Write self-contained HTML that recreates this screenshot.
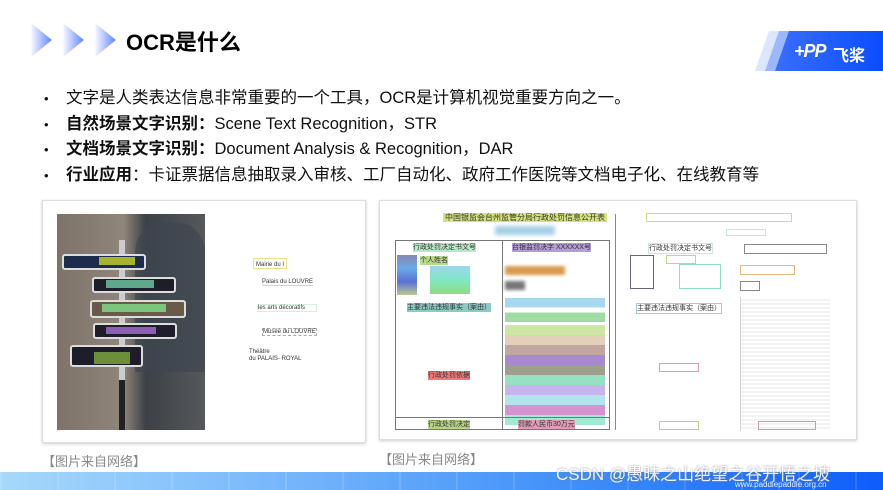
<!DOCTYPE html>
<html><head><meta charset="utf-8"><style>
*{margin:0;padding:0;box-sizing:border-box}
body{width:883px;height:490px;background:#fff;position:relative;overflow:hidden;font-family:"Liberation Sans","Noto Sans CJK SC",sans-serif;color:#111}
.abs{position:absolute}
.chev{position:absolute;top:22px;width:22px;height:36px;background:linear-gradient(90deg,rgba(80,120,255,0) 0%,rgba(80,120,255,.9) 100%);clip-path:polygon(0 0,100% 50%,0 100%)}
.title{left:126px;top:25px;font-size:22px;font-weight:bold;color:#000}
ul{position:absolute;left:44px;top:86px;list-style:none;font-size:16.5px;line-height:25.6px}
ul li:before{content:"•";display:inline-block;width:22px;font-size:13px}
b{font-weight:bold}
.panel{position:absolute;background:#fff;border:1px solid #ddd;box-shadow:0 1px 3px rgba(0,0,0,.2)}
.cap{position:absolute;font-size:13px;color:#888}
.small{font-size:6px;position:absolute;color:#333}
.box{position:absolute;border:1px solid}
.hl{position:absolute;font-size:7px;line-height:9px;color:#333;filter:blur(.3px)}
</style></head><body>
<div class="chev" style="left:30px"></div>
<div class="chev" style="left:62px"></div>
<div class="chev" style="left:94px"></div>
<div class="abs title">OCR是什么</div>
<!-- logo -->
<div class="abs" style="left:755px;top:31px;width:30px;height:40px;background:#dce6ff;clip-path:polygon(14px 0,100% 0,calc(100% - 14px) 100%,0 100%)"></div>
<div class="abs" style="left:765px;top:31px;width:30px;height:40px;background:#9bb8ff;clip-path:polygon(14px 0,100% 0,calc(100% - 14px) 100%,0 100%)"></div>
<div class="abs" style="left:775px;top:31px;width:108px;height:40px;background:linear-gradient(90deg,#3a6dff,#0a4dff);clip-path:polygon(14px 0,100% 0,100% 100%,0 100%)"></div>
<div class="abs" style="left:794px;top:41px;color:#fff;font-size:18px;font-style:italic;font-weight:bold;letter-spacing:-1px">+PP</div>
<div class="abs" style="left:833px;top:42px;color:#fff;font-size:16px;font-weight:bold">飞桨</div>
<ul>
<li>文字是人类表达信息非常重要的一个工具，OCR是计算机视觉重要方向之一。</li>
<li><b>自然场景文字识别：</b>Scene Text Recognition，STR</li>
<li><b>文档场景文字识别：</b>Document Analysis &amp; Recognition，DAR</li>
<li><b>行业应用</b>：卡证票据信息抽取录入审核、工厂自动化、政府工作医院等文档电子化、在线教育等</li>
</ul>
<!-- left panel -->
<div class="panel" style="left:42px;top:200px;width:324px;height:243px"></div>
<div class="abs" style="left:57px;top:214px;width:148px;height:216px;background:linear-gradient(90deg,#7d7369 0%,#8f857a 45%,#3c4147 60%,#55595c 100%)"></div>
<div class="abs" style="left:135px;top:222px;width:70px;height:150px;background:#3e4650;border-radius:30px 30px 0 0;opacity:.7"></div>
<div class="abs" style="left:119px;top:240px;width:6px;height:190px;background:#ccc"></div>
<div class="abs" style="left:119px;top:380px;width:6px;height:50px;background:#222"></div>
<div class="abs" style="left:62px;top:254px;width:84px;height:16px;background:#1d2b4d;border:2px solid #ddd;border-radius:3px"></div>
<div class="abs" style="left:99px;top:257px;width:36px;height:8px;background:#a6b42d"></div>
<div class="abs" style="left:92px;top:277px;width:84px;height:16px;background:#1e1d2a;border:2px solid #ddd;border-radius:3px"></div>
<div class="abs" style="left:106px;top:280px;width:48px;height:8px;background:#5fa88c"></div>
<div class="abs" style="left:90px;top:300px;width:96px;height:18px;background:#6a5a48;border:2px solid #ddd;border-radius:3px"></div>
<div class="abs" style="left:102px;top:304px;width:64px;height:8px;background:#7cc57c"></div>
<div class="abs" style="left:93px;top:323px;width:84px;height:16px;background:#1e1d2a;border:2px solid #ddd;border-radius:3px"></div>
<div class="abs" style="left:106px;top:327px;width:50px;height:7px;background:#8a5fb4"></div>
<div class="abs" style="left:70px;top:345px;width:73px;height:22px;background:#1e1d2a;border:2px solid #ddd;border-radius:3px"></div>
<div class="abs" style="left:94px;top:352px;width:36px;height:12px;background:#6d8f3a"></div>
<div class="small" style="left:253px;top:258px;border:1px solid #e7e28a;padding:0 2px">Mairie du I<sup></sup></div>
<div class="small" style="left:262px;top:279px;border-bottom:1px solid #b8e0d8">Palais du LOUVRE</div>
<div class="small" style="left:257px;top:304px;border:1px solid #d5eedd;width:60px">les arts décoratifs</div>
<div class="small" style="left:262px;top:328px;border:1px dashed #aaa">Musée du LOUVRE</div>
<div class="small" style="left:249px;top:349px;line-height:7px">Théâtre<br>du PALAIS- ROYAL</div>
<div class="cap" style="left:42px;top:451px">【图片来自网络】</div>
<!-- right panel -->
<div class="panel" style="left:379px;top:200px;width:478px;height:240px"></div>
<div class="abs" style="left:615px;top:214px;width:1px;height:216px;background:#888"></div>
<div class="hl" style="left:443px;top:213px;font-size:8px;background:#d7e37a;padding:0 2px">中国银监会台州监管分局行政处罚信息公开表</div>
<div class="abs" style="left:495px;top:226px;width:60px;height:9px;background:#a4cfe6;filter:blur(2px)"></div>
<div class="abs" style="left:395px;top:240px;width:215px;height:190px;border:1px solid #777"></div>
<div class="abs" style="left:502px;top:240px;width:1px;height:190px;background:#777"></div>
<div class="hl" style="left:413px;top:243px;background:#b7e8c8">行政处罚决定书文号</div>
<div class="hl" style="left:512px;top:243px;background:#b59bd6">台银监罚决字 XXXXXX号</div>
<div class="abs" style="left:397px;top:255px;width:20px;height:40px;background:linear-gradient(#8989b4,#69a9e4,#5b70d6,#bcc88e)"></div>
<div class="hl" style="left:420px;top:256px;background:#b8d88a">个人姓名</div>
<div class="abs" style="left:430px;top:266px;width:40px;height:28px;background:linear-gradient(#9fd6ec,#7fe7c4,#8fdc80)"></div>
<div class="abs" style="left:505px;top:266px;width:60px;height:9px;background:#d99a4f;filter:blur(1.5px)"></div>
<div class="abs" style="left:505px;top:281px;width:20px;height:9px;background:#777;filter:blur(1.5px)"></div>
<div class="hl" style="left:407px;top:303px;background:#8ccbc4">主要违法违规事实（案由）</div>
<div class="abs" style="left:505px;top:298px;width:100px;height:24px;background:linear-gradient(#a7d8ef 0 40%,#fff 40% 60%,#9fdca3 60%)"></div>
<div class="abs" style="left:505px;top:325px;width:100px;height:100px;background:linear-gradient(#cce8a4 0 10%,#e3cfbc 10% 20%,#c1a7a0 20% 30%,#a58ad0 30% 40%,#9da08a 40% 50%,#97e0c4 50% 60%,#c6b4ec 60% 70%,#b2e4ee 70% 80%,#d593cf 80% 90%,#9fe9d5 90%)"></div>
<div class="hl" style="left:428px;top:371px;background:#ee7b7b">行政处罚依据</div>
<div class="abs" style="left:395px;top:417px;width:215px;height:1px;background:#777"></div>
<div class="hl" style="left:428px;top:420px;background:#b6d283">行政处罚决定</div>
<div class="hl" style="left:518px;top:420px;background:#e09ab4">罚款人民币30万元</div>
<div class="box" style="left:646px;top:213px;width:146px;height:9px;border-color:#d5dc7a"></div>
<div class="box" style="left:726px;top:229px;width:40px;height:7px;border-color:#bde6ea"></div>
<div class="hl" style="left:648px;top:243px;font-size:7px;border:1px solid #cceadb">行政处罚决定书文号</div>
<div class="box" style="left:744px;top:244px;width:83px;height:10px;border-color:#888"></div>
<div class="box" style="left:630px;top:255px;width:24px;height:34px;border-color:#667"></div>
<div class="box" style="left:666px;top:255px;width:30px;height:9px;border-color:#b8d88a"></div>
<div class="box" style="left:679px;top:264px;width:42px;height:25px;border-color:#8fdcbc"></div>
<div class="box" style="left:740px;top:265px;width:55px;height:10px;border-color:#e0b87a"></div>
<div class="box" style="left:740px;top:281px;width:20px;height:10px;border-color:#888"></div>
<div class="hl" style="left:636px;top:303px;border:1px solid #9cd">主要违法违规事实（案由）</div>
<div class="abs" style="left:740px;top:297px;width:90px;height:134px;background:repeating-linear-gradient(#fff 0 2px,#f0f0f0 2px 4px);border-left:1px solid #ccc;opacity:.8"></div>
<div class="box" style="left:659px;top:363px;width:40px;height:9px;border-color:#e29b9b"></div>
<div class="box" style="left:659px;top:421px;width:40px;height:9px;border-color:#b6d283"></div>
<div class="box" style="left:758px;top:421px;width:58px;height:9px;border-color:#d399b0"></div>
<div class="cap" style="left:379px;top:449px">【图片来自网络】</div>
<!-- bottom bar -->
<div class="abs" style="left:0;top:472px;width:883px;height:18px;background:linear-gradient(90deg,#a6d9fb 0%,#72b3fb 35%,#3f8ff9 65%,#0e5dfb 100%)"></div>
<div class="abs" style="left:0;top:472px;width:883px;height:18px;background:repeating-linear-gradient(90deg,rgba(255,255,255,.12) 0 2px,rgba(255,255,255,0) 2px 57px)"></div>
<div class="abs" style="left:556px;top:460px;font-size:17px;color:#fff;text-shadow:0 0 2px #777;opacity:.9">CSDN @愚昧之山绝望之谷开悟之坡</div>
<div class="abs" style="left:735px;top:480px;font-size:8px;color:#e8f0ff">www.paddlepaddle.org.cn</div>
</body></html>
